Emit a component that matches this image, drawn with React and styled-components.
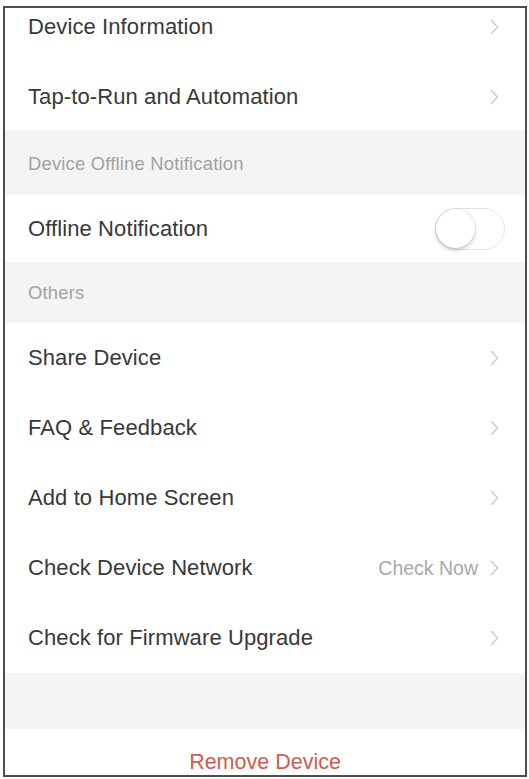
import React, { useState } from "react";
import styled, { createGlobalStyle } from "styled-components";

const GlobalStyle = createGlobalStyle`
  html, body {
    margin: 0;
    padding: 0;
    background: #ffffff;
  }
  body {
    font-family: "Liberation Sans", Arial, sans-serif;
  }
`;

const Frame = styled.div`
  box-sizing: border-box;
  margin: 6px 0 0 3px;
  width: 524px;
  height: 771px;
  border: 2px solid #4d4d4d;
  overflow: hidden;
  background: #ffffff;
`;

const List = styled.div`
  display: flex;
  flex-direction: column;
  margin-top: -18px;
`;

const Row = styled.div`
  display: flex;
  align-items: center;
  justify-content: space-between;
  box-sizing: border-box;
  height: ${(p) => p.$height || 70}px;
  padding: ${(p) => p.$top || 0}px 26px 0 23px;
  background: #ffffff;
  flex-shrink: 0;
`;

const Label = styled.span`
  font-size: 22px;
  color: #383838;
  letter-spacing: 0.1px;
`;

const Right = styled.div`
  display: flex;
  align-items: center;
  gap: 12px;
`;

const Value = styled.span`
  font-size: 19.5px;
  color: #a8a8a8;
`;

const Section = styled.div`
  display: flex;
  align-items: center;
  height: ${(p) => p.$height}px;
  padding: ${(p) => p.$offset || 0}px 23px 0;
  box-sizing: border-box;
  background: #f4f4f4;
  flex-shrink: 0;
`;

const SectionTitle = styled.span`
  font-size: 18.4px;
  color: #a2a2a2;
  letter-spacing: 0.2px;
`;

const Track = styled.button`
  position: relative;
  width: 70px;
  height: 42px;
  border-radius: 21px;
  border: 1.5px solid #e4e4e4;
  background: ${(p) => (p.$on ? "#4cd964" : "#ffffff")};
  padding: 0;
  cursor: pointer;
  margin-right: -6px;
`;

const Knob = styled.span`
  position: absolute;
  top: 0px;
  left: ${(p) => (p.$on ? "28px" : "0px")};
  width: 39px;
  height: 39px;
  border-radius: 50%;
  background: #ffffff;
  box-shadow: 0 2px 4px rgba(0, 0, 0, 0.22), 0 0 0 0.5px rgba(0, 0, 0, 0.08);
`;

const RemoveRow = styled.div`
  display: flex;
  justify-content: center;
  align-items: center;
  height: 66px;
  background: #ffffff;
  flex-shrink: 0;
`;

const RemoveText = styled.span`
  font-size: 21.5px;
  color: #cd5d51;
`;

const Chevron = () => (
  <svg width="9" height="16" viewBox="0 0 9 16">
    <polyline
      points="1.5,1.5 7.5,8 1.5,14.5"
      fill="none"
      stroke="#c9c9c9"
      strokeWidth="1.4"
      strokeLinecap="round"
      strokeLinejoin="round"
    />
  </svg>
);

const NavRow = ({ label, value, top }) => (
  <Row $top={top}>
    <Label>{label}</Label>
    <Right>
      {value && <Value>{value}</Value>}
      <Chevron />
    </Right>
  </Row>
);

const App = () => {
  const [offline, setOffline] = useState(false);

  return (
    <>
      <GlobalStyle />
      <Frame>
        <List>
          <NavRow label="Device Information" top={4} />
          <NavRow label="Tap-to-Run and Automation" top={4} />
          <Section $height={65} $offset={2}>
            <SectionTitle>Device Offline Notification</SectionTitle>
          </Section>
          <Row $height={67}>
            <Label>Offline Notification</Label>
            <Track $on={offline} onClick={() => setOffline(!offline)}>
              <Knob $on={offline} />
            </Track>
          </Row>
          <Section $height={61}>
            <SectionTitle>Others</SectionTitle>
          </Section>
          <NavRow label="Share Device" />
          <NavRow label="FAQ & Feedback" />
          <NavRow label="Add to Home Screen" />
          <NavRow label="Check Device Network" value="Check Now" />
          <NavRow label="Check for Firmware Upgrade" />
          <Section $height={56} />
          <RemoveRow>
            <RemoveText>Remove Device</RemoveText>
          </RemoveRow>
        </List>
      </Frame>
    </>
  );
};

export default App;
